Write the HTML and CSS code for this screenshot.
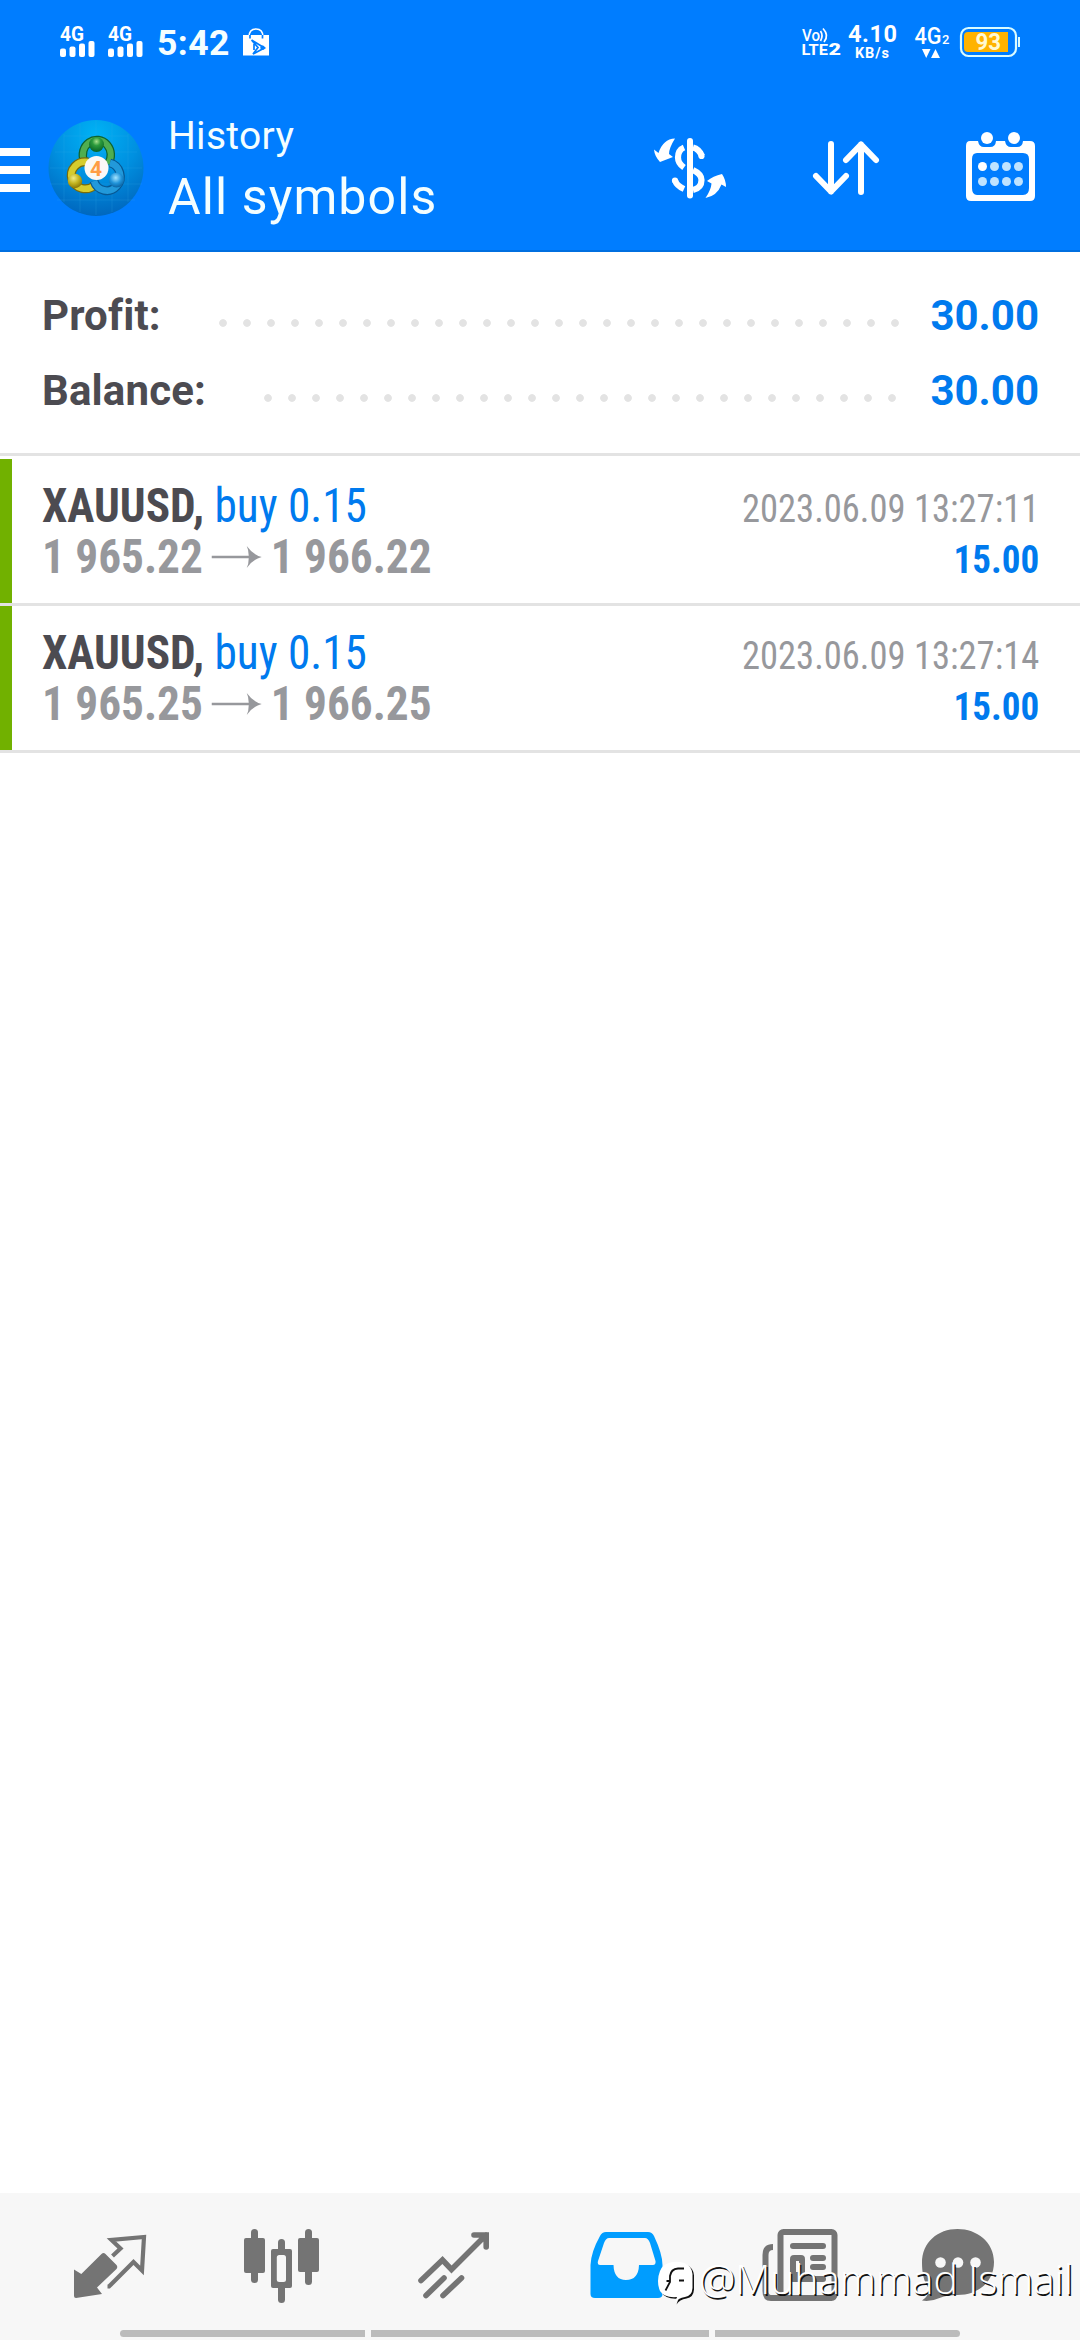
FILE: index.html
```html
<!DOCTYPE html>
<html lang="en">
<head>
<meta charset="utf-8">
<title>History</title>
<link rel="stylesheet" href="styles.css">
</head>
<body>
<div class="screen">
  <header class="header">
    <div class="status">
      <svg class="signal" viewBox="0 0 36 40" width="36" height="40">
        <text x="0" y="19" font-size="19.5" textLength="24" lengthAdjust="spacingAndGlyphs" class="st-bold">4G</text>
        <rect x="0" y="26.500" width="6" height="8.500" rx="2"/><rect x="9.500" y="24.500" width="6" height="10.500" rx="2"/><rect x="19" y="21.500" width="6" height="13.500" rx="2"/><rect x="28.500" y="19" width="6" height="16" rx="2"/>
      </svg>
      <svg class="signal" viewBox="0 0 36 40" width="36" height="40">
        <text x="0" y="19" font-size="19.5" textLength="24" lengthAdjust="spacingAndGlyphs" class="st-bold">4G</text>
        <rect x="0" y="26.500" width="6" height="8.500" rx="2"/><rect x="9.500" y="24.500" width="6" height="10.500" rx="2"/><rect x="19" y="21.500" width="6" height="13.500" rx="2"/><rect x="28.500" y="19" width="6" height="16" rx="2"/>
      </svg>
      <span class="clock">5:42</span>
      <svg class="bag" viewBox="243 22 26 40" width="26" height="40">
        <path d="M243 35H269V55.500H243Z"/>
        <path d="M249 37Q249 29 256 29Q263 29 263 37" fill="none" stroke="#fff" stroke-width="1.600"/>
        <path d="M250 35V38.500M262.500 35V38.500M251.500 40L264.500 48L253 54L258 47.500L251.500 40M254 44V50" fill="none" stroke="#007dff" stroke-width="1.700"/>
        <circle cx="262.500" cy="47.700" r="2.200" fill="#007dff"/>
      </svg>
      <svg class="volte" viewBox="800 22 42 40" width="42" height="40">
        <text x="802" y="41" font-size="16.5" textLength="18" lengthAdjust="spacingAndGlyphs" class="st-med">Vo</text>
        <path d="M820.500 31Q823.500 35.500 820.500 41M823 28.500Q829.500 35.500 824 42" fill="none" stroke="#fff" stroke-width="1.700"/>
        <text x="801.500" y="55" font-size="15.500" textLength="26.500" lengthAdjust="spacingAndGlyphs" class="st-bold">LTE</text>
        <text x="828.500" y="55" font-size="16.500" textLength="12.500" lengthAdjust="spacingAndGlyphs" class="st-black">2</text>
      </svg>
      <svg class="speed" viewBox="846 22 52 40" width="52" height="40">
        <text x="848" y="42" font-size="23.500" textLength="49" class="st-bold">4.10</text>
        <text x="855" y="58" font-size="14.500" textLength="34" class="st-bold">KB/s</text>
      </svg>
      <svg class="data" viewBox="913 22 38 40" width="38" height="40">
        <text x="914.500" y="44" font-size="24" textLength="27" lengthAdjust="spacingAndGlyphs" class="st-med">4G</text>
        <text x="942" y="44" font-size="13" class="st-med">2</text>
        <path d="M922 49H930.500L926.200 58ZM931 58H940L935.500 49Z"/>
      </svg>
      <svg class="battery" viewBox="959 22 62 40" width="62" height="40">
        <rect x="961" y="28" width="55" height="28" rx="7.500" fill="none" stroke="#d9fbff" stroke-width="2.200"/>
        <path d="M968 32H1008V52H968Q964 52 964 48V36Q964 32 968 32Z" fill="#ffb300"/>
        <rect x="1018" y="37" width="2" height="10" fill="#d9fbff"/>
        <text x="975.500" y="50" font-size="23" textLength="25.500" lengthAdjust="spacingAndGlyphs" class="charge">93</text>
      </svg>
    </div>
    <div class="appbar">
      <div class="menu"><i></i><i></i><i></i></div>
      <svg class="logo" viewBox="40 112 110 110" width="110" height="110">
        <defs>
          <radialGradient id="sky" cx=".5" cy=".15" r=".9"><stop offset="0" stop-color="#00b2f5"/><stop offset=".5" stop-color="#0090e0"/><stop offset="1" stop-color="#0062ba"/></radialGradient>
          <radialGradient id="green" cx=".5" cy=".3" r=".7"><stop offset="0" stop-color="#a5e08c"/><stop offset=".4" stop-color="#2b9a3c"/><stop offset="1" stop-color="#076326"/></radialGradient>
          <radialGradient id="gold" cx=".4" cy=".3" r=".75"><stop offset="0" stop-color="#f1ec86"/><stop offset=".5" stop-color="#c3b420"/><stop offset="1" stop-color="#826f05"/></radialGradient>
          <radialGradient id="blue" cx=".45" cy=".35" r=".75"><stop offset="0" stop-color="#a4e4ff"/><stop offset=".5" stop-color="#2094da"/><stop offset="1" stop-color="#05538f"/></radialGradient>
        </defs>
        <ellipse cx="96" cy="168" rx="47.500" ry="48" fill="url(#sky)"/>
        <path d="M64 136H128M55 152H137M50 168H142M50 184H142M57 200H135M64 134V202M80 124V212M96 121V215M112 124V212M128 134V202" stroke="#38a9ec" stroke-opacity=".2" stroke-width="1" fill="none"/>
        <path d="M84 161A14 15 0 1 1 108 164" fill="none" stroke="#0d6330" stroke-width="8.500"/>
        <path d="M84 161A14 15 0 1 1 108 164" fill="none" stroke="#4fae50" stroke-width="6"/>
        <path d="M95 185A14 13.500 0 1 1 88 162" fill="none" stroke="#776b0c" stroke-width="9"/>
        <path d="M95 185A14 13.500 0 1 1 88 162" fill="none" stroke="#d6cc2e" stroke-width="6.500"/>
        <path d="M110 163A13.500 14 0 1 1 94 181" fill="none" stroke="#075893" stroke-width="9"/>
        <path d="M110 163A13.500 14 0 1 1 94 181" fill="none" stroke="#2299da" stroke-width="6.500"/>
        <circle cx="96.500" cy="144.500" r="7.500" fill="url(#green)"/>
        <circle cx="75" cy="181" r="7.200" fill="url(#gold)"/>
        <circle cx="116.500" cy="180" r="7.500" fill="url(#blue)"/>
        <circle cx="96.500" cy="168" r="12" fill="#fbf8f6"/>
        <text x="96" y="175.500" text-anchor="middle" font-size="21" font-weight="700" fill="#ff9d45">4</text>
      </svg>
      <div class="titles">
        <div class="subtitle">History</div>
        <div class="title">All symbols</div>
      </div>
      <svg class="act-dollar" viewBox="650 126 80 84" width="80" height="84">
        <rect x="687" y="138" width="6" height="60.500" rx="3"/>
        <path d="M684 147.500Q678 150 678 157.500Q678 163.500 684 167.500M675 180.500Q677 186 684 189M693 147.500Q699 149 702 156M693 170Q701.500 174 701.500 180Q701.500 188 693 190" fill="none" stroke="#fff" stroke-width="6.200"/>
        <circle cx="701.500" cy="156" r="3.100"/><circle cx="675" cy="180.500" r="3.100"/>
        <path d="M675 138.500Q663 139 658.500 153L654 149.500Q654.500 156 660 162L673 157L669 154Q669 148 675 138.500Z"/>
        <path d="M705.500 198Q711 190 711.500 183.500L707 181Q713 176 722 174Q726 180 726 187L721.500 184.500Q717 196 705.500 198Z"/>
      </svg>
      <svg class="act-sort" viewBox="810 136 72 64" width="72" height="64">
        <path d="M831 144V191.500M816 176L831 191.500L846 176M861 192V144.500M846 160L861 144.500L876 160" fill="none" stroke="#fff" stroke-width="6" stroke-linecap="round" stroke-linejoin="round"/>
      </svg>
      <svg class="act-cal" viewBox="964 130 74 74" width="74" height="74">
        <path fill-rule="evenodd" d="M970 141H978Q979 147 984 147H990Q995.500 147 996 141H1005Q1006 147 1011 147H1017Q1022.500 147 1023 141H1030Q1035 141 1035 146V196Q1035 201 1030 201H971Q966 201 966 196V146Q966 141 970 141ZM977 153Q972 153 972 159V188Q972 195 977 195H1023Q1029 195 1029 188V159Q1029 153 1023 153Z"/>
        <circle cx="987" cy="138" r="6"/><circle cx="1014" cy="138" r="6"/>
        <circle cx="982.500" cy="166.500" r="4.500"/>
        <g fill="#bfe3ff"><circle cx="994.500" cy="166.500" r="4.500"/><circle cx="1006.500" cy="166.500" r="4.500"/><circle cx="1018.500" cy="166.500" r="4.500"/><circle cx="982.500" cy="181.500" r="4.500"/><circle cx="994.500" cy="181.500" r="4.500"/><circle cx="1006.500" cy="181.500" r="4.500"/><circle cx="1018.500" cy="181.500" r="4.500"/></g>
      </svg>
    </div>
  </header>

  <main class="content">
    <section class="summary">
      <div class="sum-row"><span class="label label-profit">Profit:</span><i class="dots dots-profit"></i><span class="total">30.00</span></div>
      <div class="sum-row"><span class="label label-balance">Balance:</span><i class="dots dots-balance"></i><span class="total">30.00</span></div>
    </section>
    <section class="deals">
      <article class="deal">
        <div class="line"><span class="order"><b>XAUUSD,</b> <span class="side">buy 0.15</span></span><span class="time">2023.06.09 13:27:11</span></div>
        <div class="line"><span class="prices"><span>1 965.22</span><svg class="arrow" viewBox="0 0 50 24" width="53" height="24" preserveAspectRatio="none"><path d="M0 10.700H37Q37 5 35 1Q41 9.500 50 12Q41 14.500 35 23Q37 19 37 13.300H0Z"/></svg><span>1 966.22</span></span><span class="gain">15.00</span></div>
      </article>
      <article class="deal">
        <div class="line"><span class="order"><b>XAUUSD,</b> <span class="side">buy 0.15</span></span><span class="time">2023.06.09 13:27:14</span></div>
        <div class="line"><span class="prices"><span>1 965.25</span><svg class="arrow" viewBox="0 0 50 24" width="53" height="24" preserveAspectRatio="none"><path d="M0 10.700H37Q37 5 35 1Q41 9.500 50 12Q41 14.500 35 23Q37 19 37 13.300H0Z"/></svg><span>1 966.25</span></span><span class="gain">15.00</span></div>
      </article>
    </section>
  </main>

  <nav class="nav">
    <div class="tabs">
      <svg viewBox="65 2220 90 90"><path d="M74 2269.500L81.300 2274L101.500 2254Q103.500 2252 105.500 2254L116.500 2265Q118 2267 116.500 2269L97 2287.500L102 2294L76 2298Q74 2298 74 2296Z"/><path d="M107.500 2286.500H109L133.500 2262L142 2270.500L144 2237L111.500 2240L120.500 2248.500L112.500 2256" fill="none" stroke="#747474" stroke-width="4.200"/></svg>
      <svg viewBox="237 2220 90 90"><rect x="244" y="2238" width="21" height="35" rx="2"/><rect x="251" y="2229" width="7" height="54" rx="3.500"/><rect x="298" y="2238" width="21" height="34" rx="2"/><rect x="305" y="2229" width="7" height="56" rx="3.500"/><rect x="278" y="2239" width="7" height="64" rx="3.500"/><rect x="271" y="2249" width="21" height="39" rx="2"/><rect x="276.800" y="2255" width="9.200" height="27" rx="2.500" fill="#f7f7f7"/></svg>
      <svg viewBox="409 2220 90 90"><path d="M421 2280.500L442.500 2260L451.500 2269.500L486 2235M474 2235H486.200V2247M426 2295.500L444 2278M443 2295.500L461.500 2278" fill="none" stroke="#747474" stroke-width="5.600" stroke-linecap="round"/></svg>
      <svg viewBox="581 2220 90 90"><path fill="#009dff" fill-rule="evenodd" d="M606 2232H648Q652 2232 654 2236Q662.500 2254 662.500 2265V2294Q662.500 2298 658 2298H595Q590.500 2298 590.500 2294V2265Q591 2252 600 2236Q602 2232 606 2232ZM609 2238Q606 2238 604 2243L598 2261Q597 2265 600 2265H613.500Q614 2280 626 2280Q638.500 2280 639 2265H653Q656 2265 655.500 2261L650 2243Q648 2238 645 2238Z"/></svg>
      <svg viewBox="753 2220 90 90"><g fill="none" stroke="#747474" stroke-width="6"><rect x="780.500" y="2232" width="54" height="66" rx="3"/><path d="M773 2247Q765.500 2247 765.500 2255V2291Q765.500 2298 771 2298H785"/><rect x="793" y="2258" width="9" height="17" rx="1"/></g><rect x="790" y="2243" width="36" height="6" rx="3"/><rect x="810" y="2255" width="16" height="6" rx="3"/><rect x="810" y="2264" width="16" height="6" rx="3"/><rect x="790" y="2276" width="36" height="6" rx="3"/></svg>
      <svg class="tab-chat" viewBox="912 2220 90 90"><path fill-rule="evenodd" d="M957.500 2229C977 2229 994 2242 994 2262C994 2282 978 2295 957.500 2295Q946 2295 941 2297.500Q931 2302 922 2300.500Q928 2297 929.500 2289C924 2283 922 2273 922 2263C922 2242 938 2229 957.500 2229Z"/><g fill="#f7f7f7"><circle cx="940.500" cy="2262.500" r="5.300"/><circle cx="958" cy="2262.500" r="5.300"/><circle cx="975.500" cy="2262.500" r="5.300"/></g></svg>
    </div>
    <div class="gesture"><i></i><i></i><i></i></div>
    <div class="watermark">
      <svg viewBox="655 2258 42 50" width="42" height="50">
        <path fill="#111" transform="translate(1.500 1.500)" d="M669 2263Q676 2260.500 684 2263Q692 2266 692.500 2274V2288Q692 2296 685 2297Q678 2298 675 2303L677 2297Q664 2298 660 2291Q656 2281 660 2271Q662 2265 669 2263Z"/>
        <path fill="#fff" d="M669 2263Q676 2260.500 684 2263Q692 2266 692.500 2274V2288Q692 2296 685 2297Q678 2298 675 2303L677 2297Q664 2298 660 2291Q656 2281 660 2271Q662 2265 669 2263Z"/>
        <path d="M665.500 2290.500L670 2282V2281H666.500M670 2281V2276Q671 2269 678 2268.500H684M679 2280.500H684" fill="none" stroke="#111" stroke-width="1.800"/>
      </svg>
      <span class="handle">@Muhammad Ismail</span>
    </div>
  </nav>
</div>
</body>
</html>
```
FILE: styles.css
```css
* { box-sizing: border-box; }
body { margin: 0; background: #fff; font-family: Roboto, "Liberation Sans", sans-serif; }
.screen { width: 1080px; height: 2340px; display: flex; flex-direction: column; overflow: hidden; }
svg { display: block; flex: none; overflow: visible; }

.header { height: 252px; background: #007dff; color: #f4feff; border-bottom: 2px solid #006fe0; flex: none; }
.header svg { fill: #fff; }
.status { height: 84px; padding: 22px 0 0 60px; display: flex; align-items: flex-start; }
.signal { margin-right: 12px; }
.clock { width: 73px; margin: 1px 0 0 1px; font-size: 35.5px; line-height: 41px; font-weight: 700; letter-spacing: .4px; white-space: nowrap; }
.bag { margin-left: 13px; }
.volte { margin-left: 531px; }
.speed { margin-left: 4px; }
.data { margin-left: 15px; }
.battery { margin-left: 8px; }
.st-bold { font-weight: 700; }
.st-black { font-weight: 900; }
.st-med { font-weight: 500; }
.charge { font-weight: 700; fill: #fff9d2; }

.appbar { height: 166px; display: flex; align-items: flex-start; padding-top: 28px; }
.menu { width: 30px; margin-top: 36px; display: flex; flex-direction: column; gap: 10px; flex: none; }
.menu i { height: 8px; background: #fff; }
.logo { margin-left: 10px; }
.titles { margin: 1px 0 0 18px; width: 301px; display: flex; flex-direction: column; gap: 8px; white-space: nowrap; }
.subtitle { font-size: 39px; line-height: 46px; letter-spacing: .3px; }
.title { font-size: 50px; line-height: 60px; letter-spacing: 1.1px; }
.act-dollar { margin: 14px 0 0 181px; }
.act-sort { margin: 24px 0 0 80px; }
.act-cal { margin: 18px 0 0 82px; }

.content { flex: 1; }
.summary { height: 204px; padding: 26px 41px 0 42px; border-bottom: 3px solid #e3e3e3; }
.sum-row { height: 75px; line-height: 75px; display: flex; align-items: center; font-size: 42px; font-weight: 700; color: #4c4b51; }
.label { white-space: nowrap; letter-spacing: .15px; }
.label-profit { width: 169px; }
.label-balance { width: 214px; }
.dots { height: 24px; margin-top: 14px; background: radial-gradient(circle at 12px 12px, #e3e3e3 3.4px, transparent 4.3px) 0 0 / 24px 24px; }
.dots-profit { width: 696px; }
.dots-balance { width: 648px; }
.total { margin-left: auto; color: #007aee; }

.deals { padding-top: 3px; }
.deal { height: 147px; padding: 22px 41px 0 42px; border-bottom: 3px solid #e3e3e3; background: linear-gradient(90deg, #71b100 12px, transparent 12px); background-clip: padding-box; font-stretch: 75%; }
.line { height: 50.5px; line-height: 50px; display: flex; justify-content: space-between; align-items: baseline; white-space: nowrap; }
.order, .prices { transform: scaleX(.943); transform-origin: left; }
.time { transform: scaleX(.937); transform-origin: right; }
.gain { transform: scaleX(.95); transform-origin: right; }
.order { font-size: 48px; color: #4c4b51; }
.side { color: #007aee; }
.time { font-size: 39px; color: #97989c; }
.prices { display: flex; align-items: center; gap: 9.5px; font-size: 48px; font-weight: 700; color: #97989c; }
.arrow { fill: #97989c; }
.gain { font-size: 39px; font-weight: 700; color: #007aee; }

.nav { height: 147px; flex: none; position: relative; background: #f7f7f7; }
.tabs { display: flex; gap: 82px; padding: 27px 78px 0 65px; }
.tabs svg { width: 90px; height: 90px; fill: #747474; }
.tabs .tab-chat { margin-left: -13px; }
.gesture { display: flex; gap: 6px; padding: 20px 120px 0; }
.gesture i { height: 7px; width: 245px; background: #bbb; }
.gesture i:first-child { border-radius: 4px 0 0 4px; }
.gesture i:nth-child(2) { width: 338px; }
.gesture i:last-child { border-radius: 0 4px 4px 0; }
.watermark { position: absolute; left: 655px; top: 65px; display: flex; }
.handle { margin: -5px 0 0 2px; font: 300 41px/50px "Open Sans", sans-serif; letter-spacing: -.2px; color: #fff; text-shadow: 1.5px 1.5px 0 #111; white-space: nowrap; }
```
